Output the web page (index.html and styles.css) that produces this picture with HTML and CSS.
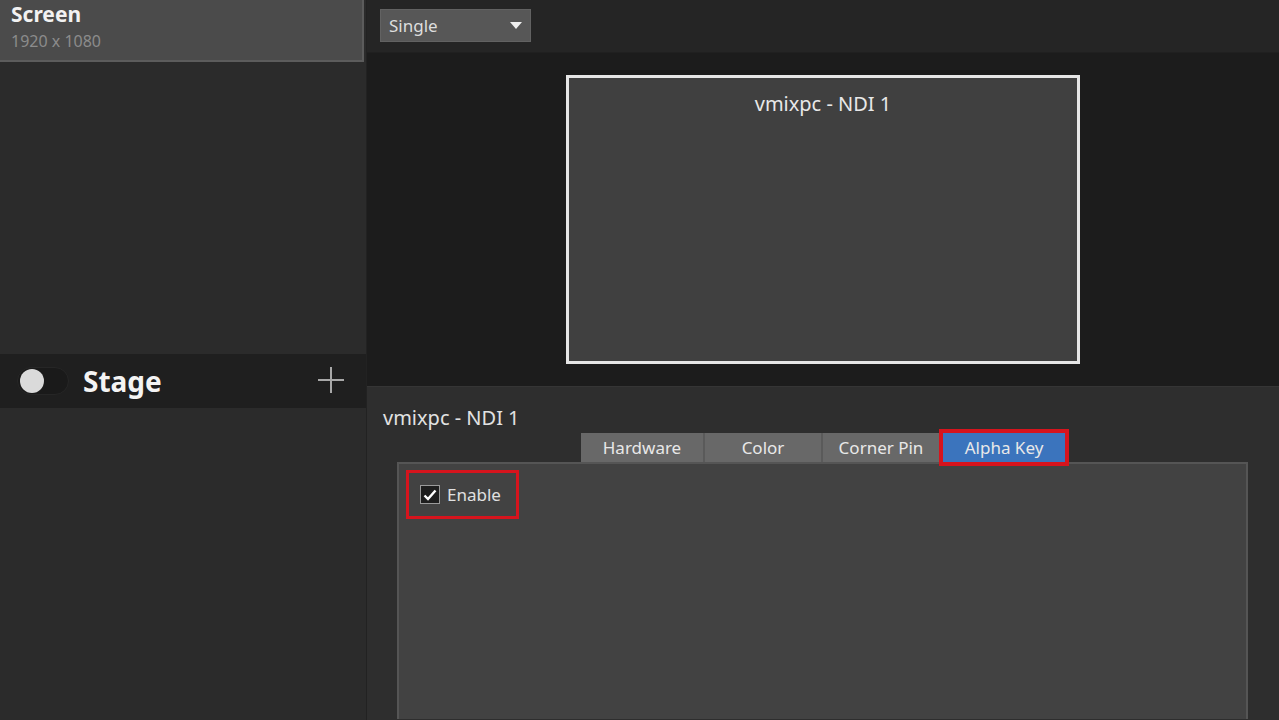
FILE: index.html
```html
<!DOCTYPE html>
<html>
<head>
    <title>Outputs</title>
    <link rel="stylesheet" href="styles.css">
</head>
<body>
    <div class="app">
        <div class="sidebar">
            <div class="screen-card">
                <div class="screen-name">Screen</div>
                <div class="screen-size">1920 x 1080</div>
            </div>
            <div class="sidebar-gap"></div>
            <div class="stage-row">
                <div class="toggle"><span class="knob"></span></div>
                <div class="stage-name">Stage</div>
                <svg class="plus" width="30" height="30" viewBox="0 0 30 30">
                    <path d="M15 2 V28 M2 15 H28" stroke="#a8a8a8" stroke-width="2" fill="none"/>
                </svg>
            </div>
            <div class="sidebar-rest"></div>
        </div>

        <div class="main">
            <div class="topbar">
                <div class="dropdown">
                    <span>Single</span>
                    <svg width="12" height="8" viewBox="0 0 12 8">
                        <path d="M0 0 H12 L6 7 Z" fill="#f0f0f0"/>
                    </svg>
                </div>
            </div>

            <div class="preview">
                <div class="preview-box">
                    <div class="preview-label">vmixpc - NDI 1</div>
                </div>
            </div>

            <div class="props">
                <div class="props-title">vmixpc - NDI 1</div>
                <div class="tabs">
                    <div class="tab">Hardware</div>
                    <div class="tab">Color</div>
                    <div class="tab">Corner Pin</div>
                    <div class="tab active">Alpha Key</div>
                </div>
                <div class="tab-body">
                    <label class="enable">
                        <span class="check">
                            <svg width="14" height="12" viewBox="0 0 14 12">
                                <path d="M1.5 6.5 L5 10 L12.5 1.5" stroke="#fff" stroke-width="2.4" fill="none"/>
                            </svg>
                        </span>
                        <span>Enable</span>
                    </label>
                </div>
            </div>
        </div>
    </div>
</body>
</html>
```

FILE: styles.css
```css
* {
    box-sizing: border-box;
}

html, body {
    margin: 0;
    height: 100%;
    overflow: hidden;
}

body {
    font-family: "Noto Sans", "Open Sans", sans-serif;
    background: #2b2b2b;
    color: #e6e6e6;
}

.app {
    display: flex;
    height: 720px;
}

/* left column */
.sidebar {
    width: 367px;
    flex-shrink: 0;
    display: flex;
    flex-direction: column;
    background: #2b2b2b;
    border-right: 1px solid #222;
}

.screen-card {
    flex-shrink: 0;
    width: 364px;
    height: 62px;
    background: #4b4b4b;
    border-right: 2px solid #5c5c5c;
    border-bottom: 2px solid #5c5c5c;
    padding: 0 0 0 11px;
}

.screen-name {
    font-size: 21px;
    font-weight: bold;
    color: #f2f2f2;
    line-height: 29px;
}

.screen-size {
    font-size: 16px;
    color: #8c8c8c;
    line-height: 24px;
}

.sidebar-gap {
    height: 292px;
    flex-shrink: 0;
}

.stage-row {
    flex-shrink: 0;
    height: 54px;
    background: #1f1f1f;
    display: flex;
    align-items: center;
    padding: 0 20px 0 17px;
}

.toggle {
    width: 52px;
    height: 28px;
    border-radius: 14px;
    background: #1a1a1a;
    border: 1px solid #262626;
    display: flex;
    align-items: center;
    padding-left: 2px;
}

.knob {
    width: 24px;
    height: 24px;
    border-radius: 50%;
    background: #dadada;
}

.stage-name {
    font-size: 28px;
    font-weight: bold;
    color: #f4f4f4;
    margin-left: 14px;
    flex: 1;
}

.plus {
    margin-top: -2px;
}

.sidebar-rest {
    flex: 1;
}

/* right column */
.main {
    flex: 1;
    display: flex;
    flex-direction: column;
    min-height: 0;
}

.topbar {
    flex-shrink: 0;
    height: 53px;
    background: #252525;
    padding: 9px 0 0 13px;
    border-bottom: 1px solid #202020;
}

.dropdown {
    width: 151px;
    height: 33px;
    background: #575757;
    border: 1px solid #626262;
    display: flex;
    align-items: center;
    justify-content: space-between;
    padding: 0 8px 0 8px;
    font-size: 17px;
    color: #dedede;
}

.preview {
    flex-shrink: 0;
    height: 333px;
    background: #1c1c1c;
    display: flex;
    justify-content: center;
    padding-top: 22px;
}

.preview-box {
    width: 514px;
    height: 289px;
    background: #404040;
    border: 3px solid #e6e6e6;
    text-align: center;
}

.preview-label {
    font-size: 20px;
    color: #e8e8e8;
    margin-top: 12px;
}

.props {
    flex: 1;
    min-height: 0;
    overflow: hidden;
    background: #2e2e2e;
    padding: 17px 0 0 16px;
    border-top: 1px solid #353535;
}

.props-title {
    font-size: 20px;
    color: #e2e2e2;
    line-height: 28px;
}

.tabs {
    display: flex;
    margin: 1px 0 0 198px;
    height: 29px;
}

.tab {
    height: 29px;
    background: #686868;
    color: #e8e8e8;
    font-size: 17px;
    line-height: 29px;
    text-align: center;
    border-right: 2px solid #5a5a5a;
}

.tab:nth-child(1) { width: 124px; }
.tab:nth-child(2) { width: 118px; }
.tab:nth-child(3) { width: 118px; }

.tab.active {
    width: 122px;
    margin-left: 2px;
    background: #3b74bd;
    border-right: none;
    outline: 4px solid #d6141d;
    outline-offset: 0;
}

.tab-body {
    margin-left: 14px;
    width: 851px;
    height: 257px;
    background: #424242;
    border: 2px solid #555;
    border-bottom: none;
    padding: 6px 0 0 7px;
}

.enable {
    display: inline-flex;
    align-items: center;
    gap: 7px;
    border: 3px solid #d6141d;
    width: 113px;
    height: 49px;
    padding-left: 11px;
    font-size: 17px;
    color: #e0e0e0;
}

.check {
    width: 20px;
    height: 19px;
    background: #1e1e1e;
    border: 1px solid #9a9a9a;
    display: flex;
    align-items: center;
    justify-content: center;
}
```
